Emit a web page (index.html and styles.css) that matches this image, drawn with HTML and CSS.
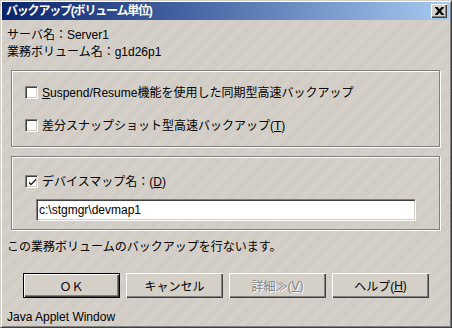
FILE: index.html
```html
<!DOCTYPE html>
<html lang="ja">
<head>
<meta charset="utf-8">
<title>バックアップ(ボリューム単位)</title>
<link rel="stylesheet" href="styles.css">
</head>
<body>
<div class="window">
  <div class="titlebar">
    <span class="title">バックアップ(ボリューム単位)</span>
    <span class="close-btn">
      <svg width="9" height="8" viewBox="0 0 9 8"><path d="M0 0h2.5l2 2.3 2-2.3h2.5v.6l-3 3.4 3 3.4v.6h-2.5l-2-2.3-2 2.3h-2.5v-.6l3-3.4-3-3.4z" fill="#000"/></svg>
    </span>
  </div>
  <div class="content">
    <div class="info">
      <div>サーバ名：Server1</div>
      <div>業務ボリューム名：g1d26p1</div>
    </div>
    <div class="group group-1">
      <div class="row">
        <span class="checkbox"></span>
        <span class="label"><u>S</u>uspend/Resume機能を使用した同期型高速バックアップ</span>
      </div>
      <div class="row row-gap">
        <span class="checkbox"></span>
        <span class="label">差分スナップショット型高速バックアップ(<u>T</u>)</span>
      </div>
    </div>
    <div class="group group-2">
      <div class="row">
        <span class="checkbox checked">
          <svg width="9" height="9" viewBox="0 0 9 9"><path d="M1 3.5l2 2 5-5v2l-5 5-2-2z" fill="#222"/></svg>
        </span>
        <span class="label">デバイスマップ名：(<u>D</u>)</span>
      </div>
      <div class="field">c:\stgmgr\devmap1</div>
    </div>
    <div class="status">この業務ボリュームのバックアップを行ないます。</div>
    <div class="buttons">
      <span class="btn btn-default">ＯＫ</span>
      <span class="btn">キャンセル</span>
      <span class="btn btn-disabled">詳細≫(<u>V</u>)</span>
      <span class="btn">ヘルプ(<u>H</u>)</span>
    </div>
    <div class="applet">Java Applet Window</div>
  </div>
</div>
</body>
</html>
```

FILE: styles.css
```css
* { box-sizing: border-box; }

body {
  margin: 0;
  font-family: "Liberation Sans", "Noto Sans CJK JP", sans-serif;
  font-size: 12px;
  color: #000;
  background: #d4d0c8;
}

.window {
  width: 452px;
  height: 328px;
  overflow: hidden;
  background-color: #d4d0c8;
  background-image: repeating-linear-gradient(135deg, rgba(255,255,255,0.08) 0 1px, rgba(0,0,0,0.03) 1px 2px);
  border: 1px solid;
  border-color: #d4d0c8 #404040 #404040 #d4d0c8;
  box-shadow: inset 1px 1px 0 #fff, inset -1px -1px 0 #808080;
  padding: 1px 2px 2px 1px;
  display: flex;
  flex-direction: column;
}

.titlebar {
  flex: none;
  height: 18px;
  background: linear-gradient(to right, #0a246a 0%, #4a6aa8 45%, #a6caf0 100%);
  display: flex;
  align-items: center;
  justify-content: space-between;
  padding: 0 2px 0 4px;
}

.title {
  color: #fff;
  font-weight: bold;
  font-size: 12px;
  line-height: 14px;
  letter-spacing: -1.2px;
}

.close-btn {
  width: 16px;
  height: 14px;
  background: #d4d0c8;
  box-shadow: inset 1px 1px 0 #fff, inset -1px -1px 0 #404040, inset -2px -2px 0 #808080;
  display: flex;
  align-items: center;
  justify-content: center;
  padding-bottom: 1px;
}

.content {
  flex: none;
  display: flex;
  flex-direction: column;
  padding-left: 5px;
}

.content > * { flex: none; }

.info {
  padding-top: 7px;
  line-height: 17px;
}

.group {
  margin-left: 4px;
  width: 429px;
  border: 1px solid #808080;
  box-shadow: inset 1px 1px 0 #fff, 1px 1px 0 #fff;
  padding-left: 13px;
}

.group-1 {
  margin-top: 9px;
  height: 77px;
  padding-top: 15px;
}

.group-2 {
  margin-top: 9px;
  height: 74px;
  padding-top: 18px;
}

.row {
  display: flex;
  align-items: center;
  height: 13px;
}

.row-gap {
  margin-top: 20px;
}

.checkbox {
  width: 13px;
  height: 13px;
  flex: none;
  background: #fff;
  border: 1px solid;
  border-color: #808080 #fff #fff #808080;
  box-shadow: inset 1px 1px 0 #404040, inset -1px -1px 0 #d4d0c8;
  display: flex;
  align-items: center;
  justify-content: center;
}

.checkbox svg {
  margin-left: 1px;
  margin-top: 1px;
}

.label {
  margin-left: 4px;
  line-height: 16px;
  white-space: nowrap;
}

.field {
  margin-top: 11px;
  margin-left: 11px;
  width: 380px;
  height: 22px;
  background: #fff;
  border: 1px solid;
  border-color: #808080 #fff #fff #808080;
  box-shadow: inset 1px 1px 0 #404040, inset -1px -1px 0 #d4d0c8;
  padding: 2px 0 0 2px;
  line-height: 17px;
}

.status {
  margin-top: 9px;
  line-height: 17px;
}

.buttons {
  display: flex;
  gap: 6px;
  margin-top: 17px;
  margin-left: 16px;
}

.btn {
  width: 97px;
  height: 25px;
  display: flex;
  align-items: center;
  justify-content: center;
  background: #d4d0c8;
  box-shadow: inset 1px 1px 0 #fff, inset -1px -1px 0 #404040, inset -2px -2px 0 #808080;
  white-space: nowrap;
}

.btn-default {
  border: 1px solid #000;
}

.btn-disabled {
  color: #808080;
  text-shadow: 1px 1px 0 #fff;
}

.applet {
  margin-top: 12px;
  line-height: 14px;
}
```
